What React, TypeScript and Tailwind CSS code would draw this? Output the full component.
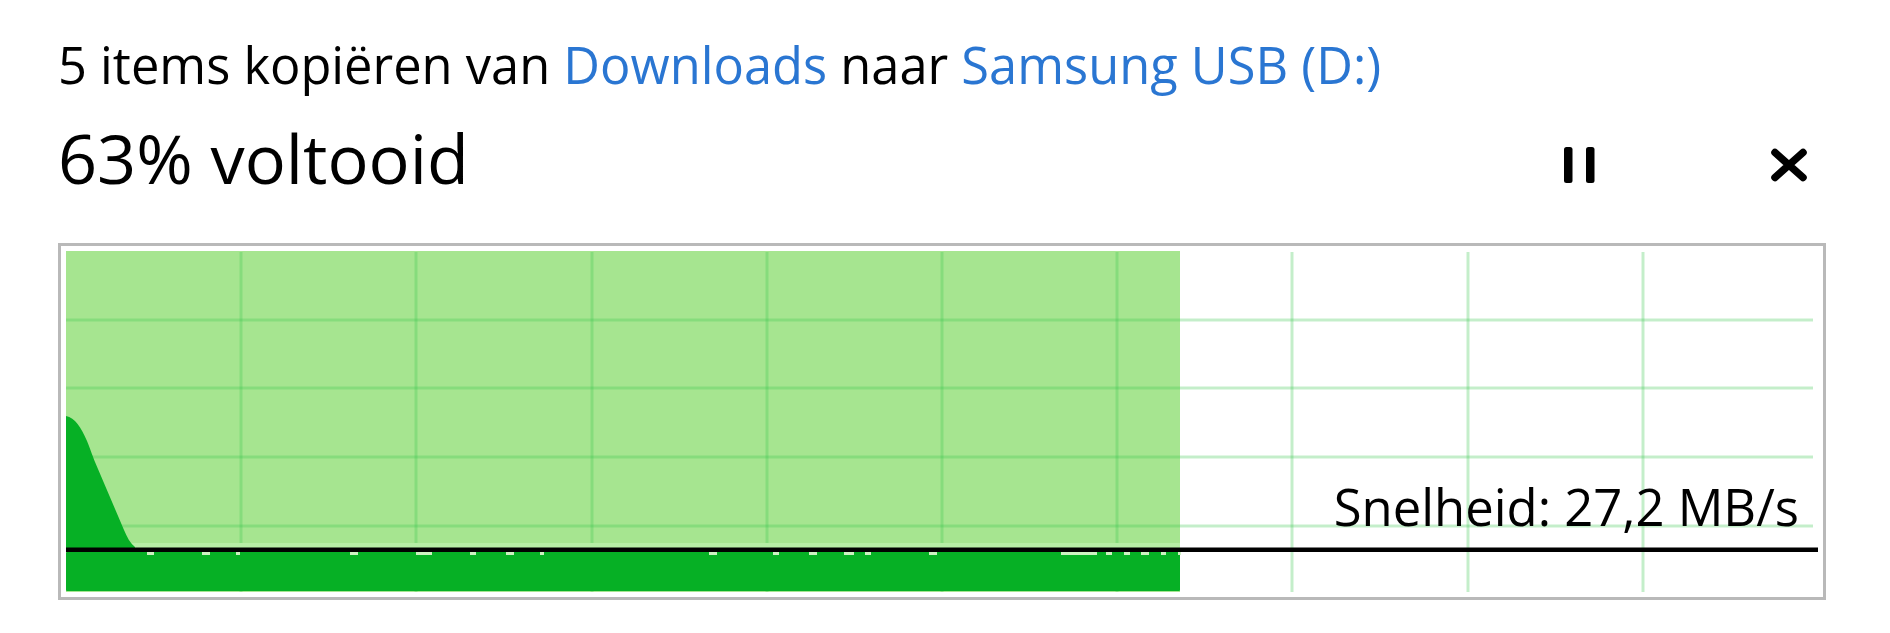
import React from 'react';

const PLOT_W = 1752;
const PLOT_H = 341;
const PROGRESS = 0.636; // 63% voltooid
const LINE_Y = 297; // huidige snelheid

// kleine lichte streepjes net onder de snelheidslijn
const specks: [number, number][] = [
  [81, 7], [136, 8], [170, 4], [284, 8], [350, 6], [356, 10], [404, 6], [440, 8], [474, 4],
  [643, 8], [707, 6], [743, 8], [778, 10], [799, 6], [863, 8],
  [995, 36], [1040, 6], [1058, 6], [1075, 8], [1095, 5], [1112, 3],
];

function PauseIcon() {
  return (
    <svg width="60" height="60" viewBox="0 0 60 60">
      <rect x="14" y="12" width="8.5" height="36" rx="2.5" fill="#000" />
      <rect x="36" y="12" width="8.5" height="36" rx="2.5" fill="#000" />
    </svg>
  );
}

function CloseIcon() {
  return (
    <svg width="60" height="60" viewBox="0 0 60 60">
      <path d="M16 17.5 L44 42.5 M44 17.5 L16 42.5" stroke="#000" strokeWidth="7.5" strokeLinecap="round" />
    </svg>
  );
}

function SpeedGraph() {
  const fillW = Math.round(PLOT_W * PROGRESS);
  const cols = Array.from({ length: 9 }, (_, i) => Math.round(((i + 1) * PLOT_W) / 10));
  const rows = [69, 137, 206, 275];

  return (
    <svg width={PLOT_W} height={PLOT_H} className="block">
      <rect x="0" y="0" width={fillW} height={PLOT_H} fill="#a6e590" />

      {cols.map((x) => (
        <rect key={'c' + x} x={x - 1.5} y="1" width="3" height={PLOT_H - 1} fill="rgba(60,200,80,0.3)" />
      ))}
      {rows.map((y) => (
        <rect key={'r' + y} x="0" y={y - 1.5} width={PLOT_W - 5} height="3" fill="rgba(60,200,80,0.3)" />
      ))}

      <rect x="66" y={LINE_Y - 5} width={fillW - 66} height="5" fill="#b7eea6" />

      <path
        d="M0 165 C9 167 15 176 21 190 C25 200 27 206 29 211 L58 279 C61 286 64 292 69 296 L69 298 L0 298 Z"
        fill="#06b025"
      />
      <rect x="0" y={LINE_Y + 4} width={fillW} height={PLOT_H - LINE_Y - 5} rx="1" fill="#06b025" />

      {specks.map(([x, w]) => (
        <rect key={'s' + x} x={x} y={LINE_Y + 4} width={w} height="3" fill="#cdf3c2" />
      ))}

      <rect x="0" y={LINE_Y - 0.5} width={PLOT_W} height="4.5" fill="#000" />
    </svg>
  );
}

export default function App() {
  return (
    <div className="h-[633px] w-full bg-white pl-[58px] pt-[31px] font-['Open_Sans',sans-serif] text-black">
      <div className="whitespace-nowrap text-[50.6px] leading-[68px]">
        5 items kopiëren van <span className="text-[#2a76d2]">Downloads</span> naar{' '}
        <span className="text-[#2a76d2]">Samsung USB (D:)</span>
      </div>

      <div className="mt-[13px] flex h-[91px] w-[1768px] items-start">
        <div className="whitespace-nowrap text-[68.4px] leading-[91px]">63% voltooid</div>
        <div className="ml-auto mr-[7px] mt-[23px] flex gap-[149px]">
          <button className="flex h-[60px] w-[60px] items-center justify-center">
            <PauseIcon />
          </button>
          <button className="flex h-[60px] w-[60px] items-center justify-center">
            <CloseIcon />
          </button>
        </div>
      </div>

      <div className="relative mt-[40px] h-[357px] w-[1768px] border-[3px] border-[#b9b9b9] bg-white p-[5px]">
        <SpeedGraph />
        <span className="absolute right-[24px] top-[227px] whitespace-nowrap text-[50.8px] leading-[68px]">
          Snelheid: 27,2 MB/s
        </span>
      </div>
    </div>
  );
}
